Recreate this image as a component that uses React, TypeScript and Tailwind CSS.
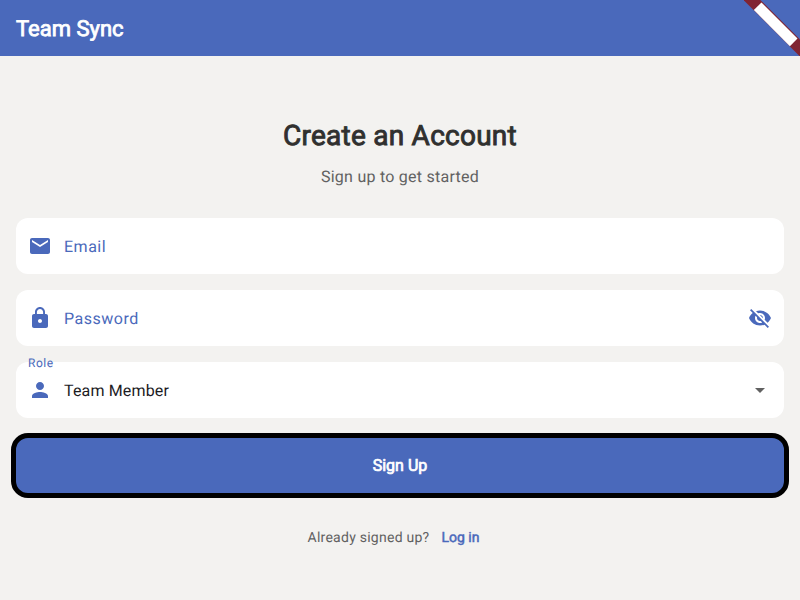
import React from "react";

const ICONS = {
  mail: "M20 4H4c-1.1 0-1.99.9-1.99 2L2 18c0 1.1.9 2 2 2h16c1.1 0 2-.9 2-2V6c0-1.1-.9-2-2-2zm0 4l-8 5-8-5V6l8 5 8-5v2z",
  lock: "M18 8h-1V6c0-2.76-2.24-5-5-5S7 3.24 7 6v2H6c-1.1 0-2 .9-2 2v10c0 1.1.9 2 2 2h12c1.1 0 2-.9 2-2V10c0-1.1-.9-2-2-2zm-6 9c-1.1 0-2-.9-2-2s.9-2 2-2 2 .9 2 2-.9 2-2 2zm3.1-9H8.9V6c0-1.71 1.39-3.1 3.1-3.1 1.71 0 3.1 1.39 3.1 3.1v2z",
  person: "M12 12c2.21 0 4-1.79 4-4s-1.79-4-4-4-4 1.79-4 4 1.79 4 4 4zm0 2c-2.67 0-8 1.34-8 4v2h16v-2c0-2.66-5.33-4-8-4z",
  hidden: "M12 7c2.76 0 5 2.24 5 5 0 .65-.13 1.26-.36 1.83l2.92 2.92c1.51-1.26 2.7-2.89 3.43-4.75-1.73-4.39-6-7.5-11-7.5-1.4 0-2.74.25-3.98.7l2.16 2.16C10.74 7.13 11.35 7 12 7zM2 4.27l2.28 2.28.46.46C3.08 8.3 1.78 10.02 1 12c1.73 4.39 6 7.5 11 7.5 1.55 0 3.03-.3 4.38-.84l.42.42L19.73 22 21 20.73 3.27 3 2 4.27zM7.53 9.8l1.55 1.55c-.05.21-.08.43-.08.65 0 1.66 1.34 3 3 3 .22 0 .44-.03.65-.08l1.55 1.55c-.67.33-1.41.53-2.2.53-2.76 0-5-2.24-5-5 0-.79.2-1.53.53-2.2zm4.31-.78l3.15 3.15.02-.16c0-1.66-1.34-3-3-3l-.17.01z",
  arrow: "M7 10l5 5 5-5z",
};

function Icon({ name, className = "text-[#4a69bb]" }: { name: keyof typeof ICONS; className?: string }) {
  return (
    <svg viewBox="0 0 24 24" className={`size-6 shrink-0 fill-current ${className}`}>
      <path d={ICONS[name]} />
    </svg>
  );
}

function Field({ icon, children, trailing }: { icon: keyof typeof ICONS; children: React.ReactNode; trailing?: React.ReactNode }) {
  return (
    <div className="relative flex h-14 items-center gap-3 rounded-xl bg-white px-3 text-base">
      <Icon name={icon} />
      {children}
      {trailing && <div className="ml-auto flex">{trailing}</div>}
    </div>
  );
}

export default function App() {
  return (
    <div className="relative flex h-[600px] w-[800px] flex-col overflow-hidden bg-[#f3f2f0] font-['Roboto',sans-serif] antialiased [text-rendering:geometricPrecision]">
      <header className="flex h-14 items-center bg-[#4a69bb] px-4 pt-[3px]">
        <h1 className="text-[22px] leading-7 text-white [-webkit-text-stroke:0.8px_white]">Team Sync</h1>
      </header>
      <svg className="absolute top-0 right-0 h-14 w-14" viewBox="-56 0 56 56">
        <g transform="rotate(45)">
          <rect x="-40" y="28" width="80" height="12" fill="#802433" />
          <rect x="-25.5" y="29" width="51" height="10.8" fill="white" />
        </g>
      </svg>
      <main className="flex flex-col px-4 pt-[62px]">
        <h2 className="text-center text-[28px] leading-9 tracking-[0.25px] text-[#30302f] [-webkit-text-stroke:0.9px_#30302f]">Create an Account</h2>
        <p className="mt-[11px] text-center text-base leading-6 tracking-[0.25px] text-[#616161]">Sign up to get started</p>
        <form className="mt-[29px] flex flex-col gap-4">
          <Field icon="mail">
            <span className="pt-0.5 tracking-[0.5px] text-[#4a69bb]">Email</span>
          </Field>
          <Field icon="lock" trailing={<Icon name="hidden" />}>
            <span className="pt-0.5 tracking-[0.5px] text-[#4a69bb]">Password</span>
          </Field>
          <Field icon="person" trailing={<Icon name="arrow" className="text-[#616161]" />}>
            <span className="absolute -top-[7px] left-3 text-xs leading-4 tracking-[0.5px] text-[#4a69bb]">Role</span>
            <span className="pt-0.5 tracking-[0.15px] text-[#1c1b1f]">Team Member</span>
          </Field>
          <button type="button" className="-mx-[5px] -mt-px h-[65px] rounded-[17px] border-[5px] border-black bg-[#4a69bb] text-base text-white [-webkit-text-stroke:0.7px_white]">
            Sign Up
          </button>
        </form>
        <div className="mt-[30px] flex items-center justify-center gap-3 pr-[13px] text-sm leading-5">
          <span className="tracking-[0.25px] text-[#616161]">Already signed up?</span>
          <a className="text-[#4a69bb] [-webkit-text-stroke:0.5px_#4a69bb]">Log in</a>
        </div>
      </main>
    </div>
  );
}
